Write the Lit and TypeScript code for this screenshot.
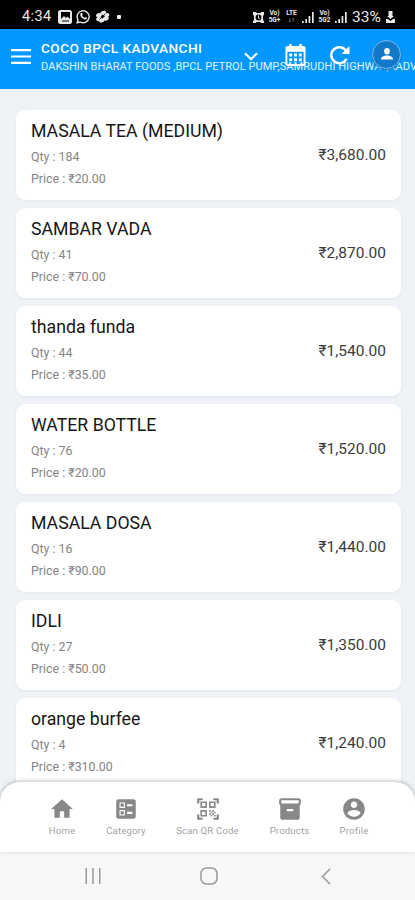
import { LitElement, html, css, svg } from "lit";
import { customElement } from "lit/decorators.js";

interface Item {
  name: string;
  qty: number;
  price: string;
  total: string;
}

const ITEMS: Item[] = [
  { name: "MASALA TEA (MEDIUM)", qty: 184, price: "20.00", total: "3,680.00" },
  { name: "SAMBAR VADA", qty: 41, price: "70.00", total: "2,870.00" },
  { name: "thanda funda", qty: 44, price: "35.00", total: "1,540.00" },
  { name: "WATER BOTTLE", qty: 76, price: "20.00", total: "1,520.00" },
  { name: "MASALA DOSA", qty: 16, price: "90.00", total: "1,440.00" },
  { name: "IDLI", qty: 27, price: "50.00", total: "1,350.00" },
  { name: "orange burfee", qty: 4, price: "310.00", total: "1,240.00" },
];

const icon = (w: number, h: number, viewBox: string, body: unknown) =>
  html`<svg width=${w} height=${h} viewBox=${viewBox} fill="currentColor">${body}</svg>`;

const TABS = [
  { label: "Home", art: svg`<path d="M10 20v-6h4v6h5v-8h3L12 3 2 12h3v8z"/>` },
  {
    label: "Category",
    art: svg`<path fill-rule="evenodd" d="M13 9.500h5v-2h-5v2zm0 7h5v-2h-5v2zM19 21H5c-1.100 0-2-.9-2-2V5c0-1.100.9-2 2-2h14c1.100 0 2 .9 2 2v14c0 1.100-.9 2-2 2zM6 11h5V6H6v5zm1-4h3v3H7V7zm-1 11h5v-5H6v5zm1-4h3v3H7v-3z"/>`,
  },
  {
    label: "Scan QR Code",
    art: svg`<path d="M9.500 6.500v3h-3v-3h3M11 5H5v6h6V5zm-1.500 9.500v3h-3v-3h3M11 13H5v6h6v-6zm6.500-6.500v3h-3v-3h3M19 5h-6v6h6V5zm-6 8h1.500v1.500H13V13zm1.500 1.500H16V16h-1.500v-1.500zM16 13h1.500v1.500H16V13zm-3 3h1.500v1.500H13V16zm1.500 1.500H16V19h-1.500v-1.500zM16 16h1.500v1.500H16V16zm1.500-1.500H19V16h-1.500v-1.500zm0 3H19V19h-1.500v-1.500zM22 7h-2V4h-3V2h5v5zm0 15v-5h-2v3h-3v2h5zM2 22h5v-2H4v-3H2v5zM2 2v5h2V4h3V2H2z"/>`,
  },
  {
    label: "Products",
    art: svg`<path fill-rule="evenodd" d="M20 2H4c-1 0-2 .9-2 2v3.010c0 .72.43 1.340 1 1.690V20c0 1.100 1.100 2 2 2h14c.9 0 2-.9 2-2V8.700c.57-.35 1-.97 1-1.690V4c0-1.100-1-2-2-2zm-5 12H9v-2h6v2zm5-7H4V4h16v3z"/>`,
  },
  {
    label: "Profile",
    art: svg`<path d="M12 2C6.480 2 2 6.480 2 12s4.480 10 10 10 10-4.480 10-10S17.520 2 12 2zm0 3c1.660 0 3 1.340 3 3s-1.340 3-3 3-3-1.340-3-3 1.340-3 3-3zm0 14.200c-2.500 0-4.710-1.280-6-3.220.03-1.990 4-3.080 6-3.080 1.990 0 5.970 1.090 6 3.080-1.290 1.940-3.500 3.220-6 3.220z"/>`,
  },
];

@customElement("status-bar")
export class StatusBar extends LitElement {
  static styles = css`
    :host { display: flex; align-items: center; height: 29px; box-sizing: border-box; padding: 4px 20px 0 22px; background: #000; color: #e8e8e8; font: 14.500px/18px Roboto, sans-serif; }
    .time { width: 32px; letter-spacing: 0.4px; }
    .left { display: flex; align-items: center; gap: 4px; margin-left: 4px; flex: 1; }
    .dot { width: 4px; height: 4px; border-radius: 1px; background: #eee; margin-left: 3px; }
    .right { display: flex; align-items: center; gap: 4px; }
    .net { display: flex; flex-direction: column; align-items: center; font: 700 6.500px/7px Roboto, sans-serif; width: 13px; }
    .pct { font-size: 15.500px; width: 32px; margin-left: 1px; }
    .bat { margin-left: -2px; }
    svg { display: block; flex: none; }
  `;
  render() {
    const bars = icon(12, 12, "0 0 12 12", svg`<path d="M0 10h1.700v2H0zM3.300 8H5v4H3.300zM6.600 5h1.700v7H6.600zM10 1h1.700v11H10z"/>`);
    return html`
      <span class="time">4:34</span>
      <div class="left">
        ${icon(14, 14, "0 0 14 14", svg`<path fill-rule="evenodd" d="M2.500 0h9A2.500 2.500 0 0 1 14 2.500v9a2.500 2.500 0 0 1-2.500 2.500h-9A2.500 2.500 0 0 1 0 11.500v-9A2.500 2.500 0 0 1 2.500 0zM3 2v7l3-3 2 2 1.500-1.500L12 9V2zM4 10.500v1h7v-1z"/>`)}
        ${icon(15, 15, "0 0 15 15", svg`<path d="M1.200 13.800l.8-3A6 6 0 1 1 4.300 13z" fill="none" stroke="currentColor" stroke-width="1.400"/><path d="M5 4l1.200 0 .6 1.700-.7.8c.6 1.100 1.300 1.800 2.500 2.300l.8-.9 1.700.8c0 1.300-1.100 2-2.200 1.800C6.300 10 4.300 7.700 4.200 5.800 4.200 5 4.500 4.300 5 4z"/>`)}
        ${icon(15, 13, "0 0 15 13", svg`<g transform="rotate(-20 7.500 6.500)"><ellipse cx="4.500" cy="4.200" rx="2.900" ry="2.200"/><ellipse cx="9.500" cy="3.600" rx="2.900" ry="2.200"/><ellipse cx="12" cy="6.700" rx="2.600" ry="2.100"/><ellipse cx="3" cy="7.500" rx="2.600" ry="2.100"/><ellipse cx="10" cy="9.500" rx="2.900" ry="2.200"/><ellipse cx="5.500" cy="9.800" rx="2.800" ry="2.200"/></g><path d="M4.500 9.500l6-6M7.500 4.500v4" stroke="#000" stroke-width=".7"/>`)}
        <i class="dot"></i>
      </div>
      <div class="right">
        ${icon(11, 12, "0 0 12 13", svg`<path d="M0 1h3l1 1h4l1-1h3v3l-1 1v5l1 1v2H9l-1-1H4l-1 1H0v-2l1-1V5L0 4z"/><circle cx="6" cy="7" r="3.200" fill="#000"/><path d="M5.500 4.500h1v2.500l1.500 1-.5.700-2-1.200z"/>`)}
        <div class="net"><span>Vo)</span><span>5G+</span></div>
        <div class="net"><span>LTE</span><span>↓↑</span></div>
        ${bars}
        <div class="net"><span>Vo)</span><span>5G2</span></div>
        ${bars}
        <span class="pct">33%</span>
        <span class="bat">${icon(9, 12, "0 0 9 12", svg`<path d="M2.500 0h4v5H8L4.500 8 1 5h1.500zM0 8h2l2.500 2L7 8h2v4H0z"/>`)}</span>
      </div>
    `;
  }
}

@customElement("store-header")
export class StoreHeader extends LitElement {
  static styles = css`
    :host { display: grid; grid-template-columns: 41px 1fr; height: 59.500px; background: #0398ff; color: #fff; overflow: hidden; position: relative; font-family: Roboto, sans-serif; }
    .menu { padding: 20px 0 0 11px; }
    .menu svg { display: block; }
    .text { padding-top: 10px; min-width: 0; }
    .name { font-size: 13.700px; font-weight: 500; line-height: 18px; letter-spacing: 0.42px; white-space: nowrap; }
    .addr { font-size: 11px; line-height: 14px; margin-top: 3px; letter-spacing: 0.05px; white-space: nowrap; color: #e2f4ff; }
    .actions { position: absolute; right: 14px; top: 9px; display: flex; align-items: center; height: 34px; }
    .actions svg { display: block; }
    .chev { margin-right: 27px; padding-top: 2px; }
    .cal { margin-right: 24px; }
    .ref { margin-right: 22px; }
    .avatar { width: 27px; height: 27px; border: 1.500px solid #78c2f7; border-radius: 50%; background: #1278c8; display: grid; place-items: center; margin-top: -2px; box-shadow: 0 1px 2px #0567b0; }
  `;
  render() {
    return html`
      <div class="menu">${icon(20, 15, "0 0 20 15", svg`<path d="M0 0h20v2.200H0zM0 6.400h20v2.200H0zM0 12.800h20V15H0z"/>`)}</div>
      <div class="text">
        <div class="name">COCO BPCL KADVANCHI</div>
        <div class="addr">DAKSHIN BHARAT FOODS ,BPCL PETROL PUMP,SAMRUDHI HIGHWAY,KADVANCHI</div>
      </div>
      <div class="actions">
        <span class="chev">${icon(14, 9, "0 0 14 9", svg`<path d="M1 1.200l6 6 6-6" fill="none" stroke="currentColor" stroke-width="2.200"/>`)}</span>
        <span class="cal">${icon(21, 22, "0 0 21 23", svg`<path fill-rule="evenodd" d="M2 2h2V0h2.500v2h8V0H17v2h2a2 2 0 0 1 2 2v17a2 2 0 0 1-2 2H2a2 2 0 0 1-2-2V4a2 2 0 0 1 2-2zM2 8v13h17V8zM4 10h3v3H4zm5 0h3v3H9zm5 0h3v3h-3zM4 15h3v3H4zm5 0h3v3H9zm5 0h3v3h-3z"/>`)}</span>
        <span class="ref">${icon(20, 20, "0 0 20 20", svg`<path d="M16.500 13.700a8 8 0 1 1-.3-7.600" fill="none" stroke="currentColor" stroke-width="2.500"/><path d="M19.500 1v8h-8z"/>`)}</span>
        <span class="avatar">${icon(12, 12, "0 0 12 12", svg`<ellipse cx="6" cy="3.300" rx="2.800" ry="3.300"/><path d="M0 11.500c0-3 3-4 6-4s6 1 6 4z"/>`)}</span>
      </div>
    `;
  }
}

@customElement("item-card")
export class ItemCard extends LitElement {
  static properties = { item: { attribute: false } };
  declare item: Item;
  static styles = css`
    :host { display: flex; align-items: center; justify-content: space-between; height: 90px; box-sizing: border-box; flex: none; padding: 0 15px; border-radius: 9px; background: #fff; box-shadow: 0 1px 3px rgba(60, 70, 90, 0.07); font-family: Roboto, sans-serif; }
    .name { font-size: 17.700px; line-height: 22px; color: #161616; margin-bottom: 4px; }
    .meta { font-size: 12.400px; line-height: 22px; color: #858585; }
    .total { font-size: 15.500px; line-height: 20px; color: #3c3c3c; }
  `;
  render() {
    return html`
      <div>
        <div class="name">${this.item.name}</div>
        <div class="meta">Qty : ${this.item.qty}</div>
        <div class="meta">Price : ₹${this.item.price}</div>
      </div>
      <div class="total">₹${this.item.total}</div>
    `;
  }
}

@customElement("tab-bar")
export class TabBar extends LitElement {
  static styles = css`
    :host { display: grid; grid-template-columns: 60px 68px 95px 69px 60px; justify-content: center; height: 70px; box-sizing: border-box; padding-top: 14px; padding-left: 1px; background: #fff; border-radius: 20px 20px 0 0; box-shadow: 0 -1px 4px rgba(0, 0, 0, 0.25); color: #888; position: relative; font: 9.500px/12px Roboto, sans-serif; }
    .tab { display: flex; flex-direction: column; align-items: center; gap: 3px; white-space: nowrap; }
    .label { color: #a2a2a2; letter-spacing: 0.2px; }
    svg { display: block; }
  `;
  render() {
    return TABS.map((t) => html`<div class="tab">${icon(26, 26, "0 0 24 24", t.art)}<span class="label">${t.label}</span></div>`);
  }
}

@customElement("app-root")
export class AppRoot extends LitElement {
  static styles = css`
    :host { display: flex; flex-direction: column; width: 415px; height: 900px; overflow: hidden; background: #eff3f8; }
    .list { flex: 1; min-height: 0; overflow: hidden; display: flex; flex-direction: column; gap: 8px; padding: 21.500px 14px 0 16px; }
    .keys { display: grid; grid-template-columns: repeat(3, 116.500px); justify-content: center; align-items: center; justify-items: center; height: 48px; flex: none; background: #f6f7f9; color: #999; padding-left: 3px; box-sizing: border-box; }
  `;
  render() {
    return html`
      <status-bar></status-bar>
      <store-header></store-header>
      <main class="list">${ITEMS.map((i) => html`<item-card .item=${i}></item-card>`)}</main>
      <tab-bar></tab-bar>
      <div class="keys">
        ${icon(16, 16, "0 0 16 16", svg`<path d="M.5 0H2v16H.5zM7.200 0h1.500v16H7.200zM14 0h1.500v16H14z"/>`)}
        ${icon(18, 18, "0 0 18 18", svg`<rect x="1" y="1" width="16" height="16" rx="5.500" fill="none" stroke="currentColor" stroke-width="1.500"/>`)}
        ${icon(10, 17, "0 0 10 17", svg`<path d="M9 1L1.500 8.500 9 16" fill="none" stroke="currentColor" stroke-width="1.500"/>`)}
      </div>
    `;
  }
}
